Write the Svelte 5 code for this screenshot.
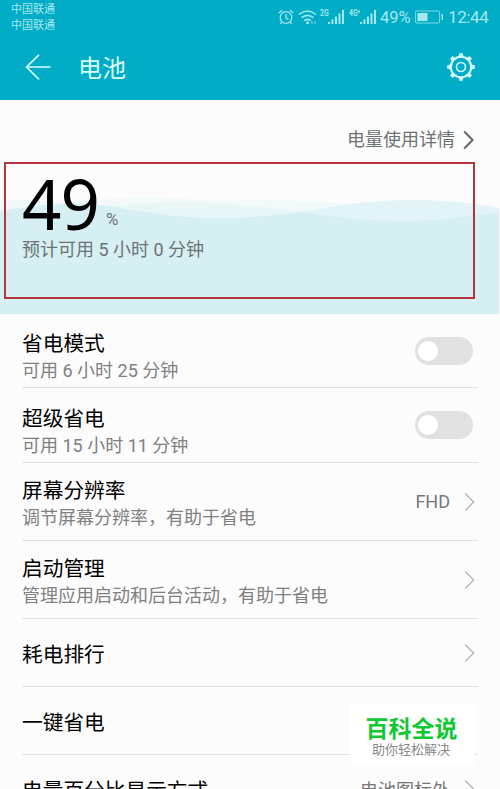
<script>
  const rows = [
    { title: '省电模式', sub: '可用 6 小时 25 分钟', toggle: true, size: 'r74' },
    { title: '超级省电', sub: '可用 15 小时 11 分钟', toggle: true, size: 'r75' },
    { title: '屏幕分辨率', sub: '调节屏幕分辨率，有助于省电', value: 'FHD', size: 'r78' },
    { title: '启动管理', sub: '管理应用启动和后台活动，有助于省电', size: 'r78' },
    { title: '耗电排行', size: 'r68' },
    { title: '一键省电', size: 'r68', plain: true },
    { title: '电量百分比显示方式', value: '电池图标外', size: 'r68' }
  ];
</script>

{#snippet bars()}
  <svg class="bars" width="17" height="16" viewBox="0 0 17 16" fill="currentColor">
    <path d="M0 13h2v2H0zM3.5 10.5h2V15h-2zM7 7.5h2V15H7zM10.5 4.5h2V15h-2zM14 1h2v14h-2z" />
  </svg>
{/snippet}

{#snippet chevron()}
  <svg class="chev" width="12" height="20" viewBox="0 0 12 20" fill="none" stroke="currentColor" stroke-width="1.6">
    <path d="M1.2 1.5 9.6 10 1.2 18.5" />
  </svg>
{/snippet}

<main class="screen">
  <header>
    <div class="status">
      <div class="carriers"><span>中国联通</span><span>中国联通</span></div>
      <div class="indicators">
        <svg class="alarm" width="16" height="16" viewBox="0 0 16 16" fill="none" stroke="currentColor" stroke-width="1.3">
          <circle cx="8" cy="8.5" r="5.8" />
          <path d="M8 5v4l2.4 1.4M.8 4 4 1.2M15.2 4 12 1.2M3.8 13.2 2.4 15M12.2 13.2l1.4 1.8" />
        </svg>
        <svg class="wifi" width="20" height="16" viewBox="0 0 20 16" fill="none" stroke="currentColor" stroke-width="1.6">
          <path d="M1 5.5Q9.5-1.5 18 5.5M3.5 8.7q6-4.7 12 0M6 11.7q3.5-2.7 7 0" />
          <circle cx="9.5" cy="13.7" r="1.5" fill="currentColor" stroke="none" />
          <path d="M14 12.3v2.4M17 12.3v2.4" stroke-width="1" />
        </svg>
        <span class="net">2G</span>{@render bars()}
        <span class="net four">4G⁺</span>{@render bars()}
        <span class="pct">49%</span>
        <svg class="battery" width="29" height="14" viewBox="0 0 29 14">
          <rect x=".6" y="1" width="24" height="12" rx="1" fill="none" stroke="currentColor" opacity=".75" />
          <path d="M2.5 3h10v8h-10z" fill="currentColor" />
          <path d="M27.3 4v6" stroke="currentColor" stroke-width="1.4" />
        </svg>
        <span class="clock">12:44</span>
      </div>
    </div>
    <div class="bar">
      <svg width="26" height="26" viewBox="0 0 26 26" fill="none" stroke="currentColor" stroke-width="1.7" stroke-linecap="round">
        <path d="M13.5 1.3 1.5 13l12 11.8M1.5 13h23.3" />
      </svg>
      <h1>电池</h1>
      <svg class="gear" width="30" height="30" viewBox="-15 -15 30 30" fill="none" stroke="currentColor">
        <circle r="10.2" stroke-width="2.1" />
        <circle r="4.5" stroke-width="1.6" />
        {#each [0, 45, 90, 135, 180, 225, 270, 315] as a}
          <path d="M-2-10.8-1.4-13.5H1.4L2-10.8Z" fill="currentColor" stroke-width=".6" transform="rotate({a})" />
        {/each}
      </svg>
    </div>
  </header>

  <section class="hero">
    <svg class="waves" width="499" height="120" viewBox="0 0 499 120">
      <path fill="#f1f9fb" d="M0 6Q30 5 70 8C95 6 115 4 145 4C180 4 205 6 230 7C250 5 290 6 335 9C380 14 410 18 430 21L499 22V120H0Z" />
      <path fill="#e2f4f7" d="M0 17C40 10 80 7 115 13C160 22 200 27 240 24C310 20 345 6 410 6C445 6 470 8 499 14V120H0Z" />
      <path fill="#d5eff3" d="M0 17C40 10 80 8 115 13C155 20 185 24 220 24C250 24 275 21 301 18C340 24 370 27 405 27C445 27 465 21 499 19V120H0Z" />
      <path fill="#e8f6f8" d="M115 12.5C180 4 235 9 301 18C270 21 250 24 220 24C185 24 155 20 115 12.5Z" />
    </svg>
    <div class="detail"><span>电量使用详情</span>{@render chevron()}</div>
    <div class="level"><strong>49</strong><span>%</span></div>
    <p>预计可用 5 小时 0 分钟</p>
    <div class="mark"></div>
  </section>

  <section class="list">
    {#each rows as row}
      <div class="row {row.size}">
        <div class="text">
          <div class="title">{row.title}</div>
          {#if row.sub}<div class="sub">{row.sub}</div>{/if}
        </div>
        {#if row.toggle}
          <div class="toggle"><i></i></div>
        {:else if !row.plain}
          {#if row.value}<span class="value">{row.value}</span>{/if}
          {@render chevron()}
        {/if}
      </div>
    {/each}
  </section>

  <aside><b>百科全说</b><span>助你轻松解决</span></aside>
</main>

<style>
  :global(body) { margin: 0; overflow: hidden; }
  .screen {
    position: relative; width: 500px; height: 789px; overflow: hidden;
    background: #fcfcfc; color: #000; font-weight: 400;
    font-family: Roboto, "Noto Sans CJK SC", sans-serif;
  }
  svg { flex: none; display: block; }
  header { height: 100px; background: #00acc6; color: #d9ffff; display: flex; flex-direction: column; box-sizing: border-box; }
  .status { height: 34px; display: flex; justify-content: space-between; color: #a5e8ef; }
  .carriers { display: flex; flex-direction: column; padding: 2px 0 0 11px; font-size: 11px; line-height: 15.5px; }
  .indicators { display: flex; height: 34px; align-items: center; padding-right: 11px; }
  .alarm { margin-right: 4px; }
  .wifi { margin-right: 2px; }
  .net { font-size: 9.5px; font-weight: 700; line-height: 10px; width: 8px; margin-bottom: 9px; white-space: nowrap; transform: scaleX(.72); transform-origin: left; }
  .four { margin-left: 4px; width: 11px; }
  .pct { font-size: 16.5px; margin-left: 3px; width: 35px; }
  .battery { width: 29px; }
  .clock { font-size: 17px; margin-left: 4px; width: 41px; letter-spacing: -.4px; }
  .bar { height: 66px; display: flex; align-items: center; padding: 0 24px 0 25px; }
  h1 { margin: 0 0 0 27px; padding-top: 3px; font-size: 24px; font-weight: 400; line-height: 36px; flex: 1; }
  .hero { position: relative; height: 214px; color: #6d7374; }
  .waves { position: absolute; left: 0; top: 94px; }
  .detail { position: relative; display: flex; justify-content: flex-end; align-items: center; padding: 26px 25px 0 0; font-size: 18px; line-height: 27px; }
  .detail .chev { margin-left: 8px; stroke-width: 2; }
  .level { position: relative; display: flex; align-items: flex-start; padding-left: 22px; height: 83px; color: #000; }
  strong { font: 400 69px/66px "Noto Sans", sans-serif; letter-spacing: -1px; margin-top: 17px; }
  .level span { font-size: 17px; line-height: 20px; color: #6d7374; margin: 56px 0 0 7px; }
  p { position: relative; margin: 0 0 0 22px; font-size: 18px; line-height: 27px; }
  .mark { position: absolute; left: 4px; top: 62px; width: 467px; height: 133px; border: 2px solid #b2343c; }
  .list { padding: 0 22px; }
  .row { display: flex; align-items: center; box-sizing: border-box; border-bottom: 1px solid #e2e2e2; }
  .r74 { height: 74px; } .r75 { height: 75px; } .r78 { height: 78px; } .r68 { height: 68px; }
  .text { flex: 1; padding-top: 6px; }
  .r74 .text, .r75 .text { padding-top: 14px; }
  .title { font-size: 20.7px; line-height: 27px; }
  .sub { font-size: 18px; line-height: 26px; color: #808080; white-space: nowrap; }
  .value { font-size: 18px; color: #777; margin-right: 14px; }
  .chev { margin-right: 2px; color: #bbb; }
  .detail .chev { color: #666; margin-right: 0; }
  .toggle { width: 58px; height: 28px; border-radius: 14px; background: #e1e1e1; margin-right: 5px; box-sizing: border-box; padding: 4px 2.5px; }
  .toggle i { display: block; width: 20px; height: 20px; border-radius: 50%; background: #fff; }
  aside { position: absolute; left: 350px; top: 704px; width: 125px; height: 60px; background: #fff; display: flex; flex-direction: column; align-items: center; }
  aside b { font-size: 23px; line-height: 30px; margin: 11px 2px 0 0; color: #0fc832; font-weight: 700; }
  aside span { font-size: 13px; line-height: 14px; margin: -2px 3px 0 0; color: #888; }
</style>
